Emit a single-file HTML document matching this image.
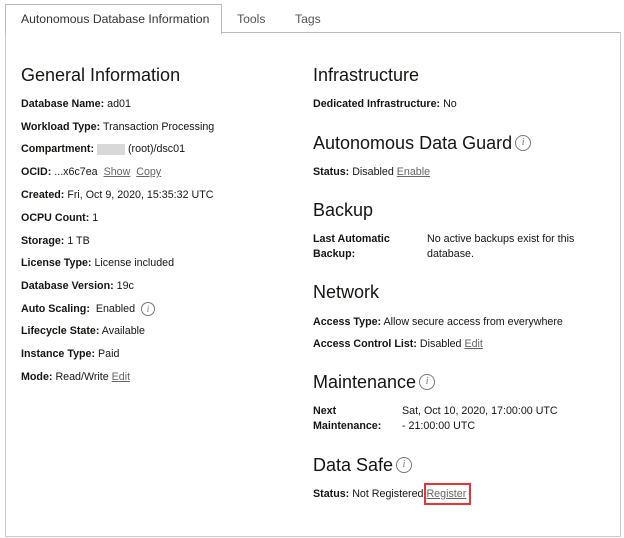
<!DOCTYPE html><html><head><style>
body{margin:0;width:624px;height:538px;background:#fff;font-family:"Liberation Sans",Arial,sans-serif;color:#161513;position:relative;overflow:hidden}
#w{position:absolute;left:0;top:2px;width:624px;height:536px}
.a{position:absolute;white-space:nowrap}
.h{font-size:18px;line-height:22px;margin-top:-2px}
.t{font-size:10.7px;line-height:13px}
b{font-weight:bold}
.l{color:#666;text-decoration:underline}
.i{display:inline-block;width:12px;height:12px;border:1px solid #777;border-radius:50%;font:italic 9px "Liberation Serif",serif;color:#777;text-align:center;line-height:12px;vertical-align:middle;margin-left:3px}
.h .i{width:14px;height:14px;line-height:14px;font-size:10px;margin-top:-3px}
</style></head><body>
<div class="a" style="left:5px;top:32px;width:614px;height:503px;border:1px solid #c9c9c9;border-top:1px solid #bbb"></div>
<div class="a" style="left:5px;top:4px;width:215px;height:29px;border:1px solid #bbb;border-bottom:none;background:#fff"></div>
<div class="a" style="left:21px;top:12px;font-size:12.2px;color:#333">Autonomous Database Information</div>
<div class="a" style="left:237px;top:12px;font-size:12.2px;color:#555">Tools</div>
<div class="a" style="left:295px;top:12px;font-size:12.2px;color:#555">Tags</div>
<div id="w">
<div class="a h" style="left:21px;top:64px">General Information</div>
<div class="a t" style="left:21px;top:96px"><b>Database Name:</b> ad01</div>
<div class="a t" style="left:21px;top:119px"><b>Workload Type:</b> Transaction Processing</div>
<div class="a t" style="left:21px;top:141px"><b>Compartment:</b> <span style="display:inline-block;width:28px;height:11px;background:#d8d8d8;vertical-align:middle"></span> (root)/dsc01</div>
<div class="a t" style="left:21px;top:164px"><b>OCID:</b> ...x6c7ea &nbsp;<span class="l">Show</span> &nbsp;<span class="l">Copy</span></div>
<div class="a t" style="left:21px;top:187px"><b>Created:</b> Fri, Oct 9, 2020, 15:35:32 UTC</div>
<div class="a t" style="left:21px;top:210px"><b>OCPU Count:</b> 1</div>
<div class="a t" style="left:21px;top:233px"><b>Storage:</b> 1 TB</div>
<div class="a t" style="left:21px;top:255px"><b>License Type:</b> License included</div>
<div class="a t" style="left:21px;top:278px"><b>Database Version:</b> 19c</div>
<div class="a t" style="left:21px;top:300px"><b>Auto Scaling:</b> &nbsp;Enabled <span class="i">i</span></div>
<div class="a t" style="left:21px;top:323px"><b>Lifecycle State:</b> Available</div>
<div class="a t" style="left:21px;top:346px"><b>Instance Type:</b> Paid</div>
<div class="a t" style="left:21px;top:369px"><b>Mode:</b> Read/Write <span class="l">Edit</span></div>

<div class="a h" style="left:313px;top:64px">Infrastructure</div>
<div class="a t" style="left:313px;top:96px"><b>Dedicated Infrastructure:</b> No</div>
<div class="a h" style="left:313px;top:132px">Autonomous Data Guard<span class="i">i</span></div>
<div class="a t" style="left:313px;top:164px"><b>Status:</b> Disabled <span class="l">Enable</span></div>
<div class="a h" style="left:313px;top:199px">Backup</div>
<div class="a t" style="left:313px;top:231px"><b>Last Automatic</b></div>
<div class="a t" style="left:313px;top:246px"><b>Backup:</b></div>
<div class="a t" style="left:427px;top:231px">No active backups exist for this</div>
<div class="a t" style="left:427px;top:246px">database.</div>
<div class="a h" style="left:313px;top:281px">Network</div>
<div class="a t" style="left:313px;top:314px"><b>Access Type:</b> Allow secure access from everywhere</div>
<div class="a t" style="left:313px;top:336px"><b>Access Control List:</b> Disabled <span class="l">Edit</span></div>
<div class="a h" style="left:313px;top:371px">Maintenance<span class="i">i</span></div>
<div class="a t" style="left:313px;top:403px"><b>Next</b></div>
<div class="a t" style="left:313px;top:418px"><b>Maintenance:</b></div>
<div class="a t" style="left:402px;top:403px">Sat, Oct 10, 2020, 17:00:00 UTC</div>
<div class="a t" style="left:402px;top:418px">- 21:00:00 UTC</div>
<div class="a h" style="left:313px;top:454px">Data Safe<span class="i">i</span></div>
<div class="a t" style="left:313px;top:486px"><b>Status:</b> Not Registered <span class="l">Register</span></div>
<div class="a" style="left:424px;top:481px;width:43px;height:18px;border:2px solid #e5343b"></div>
</div>
</body></html>
